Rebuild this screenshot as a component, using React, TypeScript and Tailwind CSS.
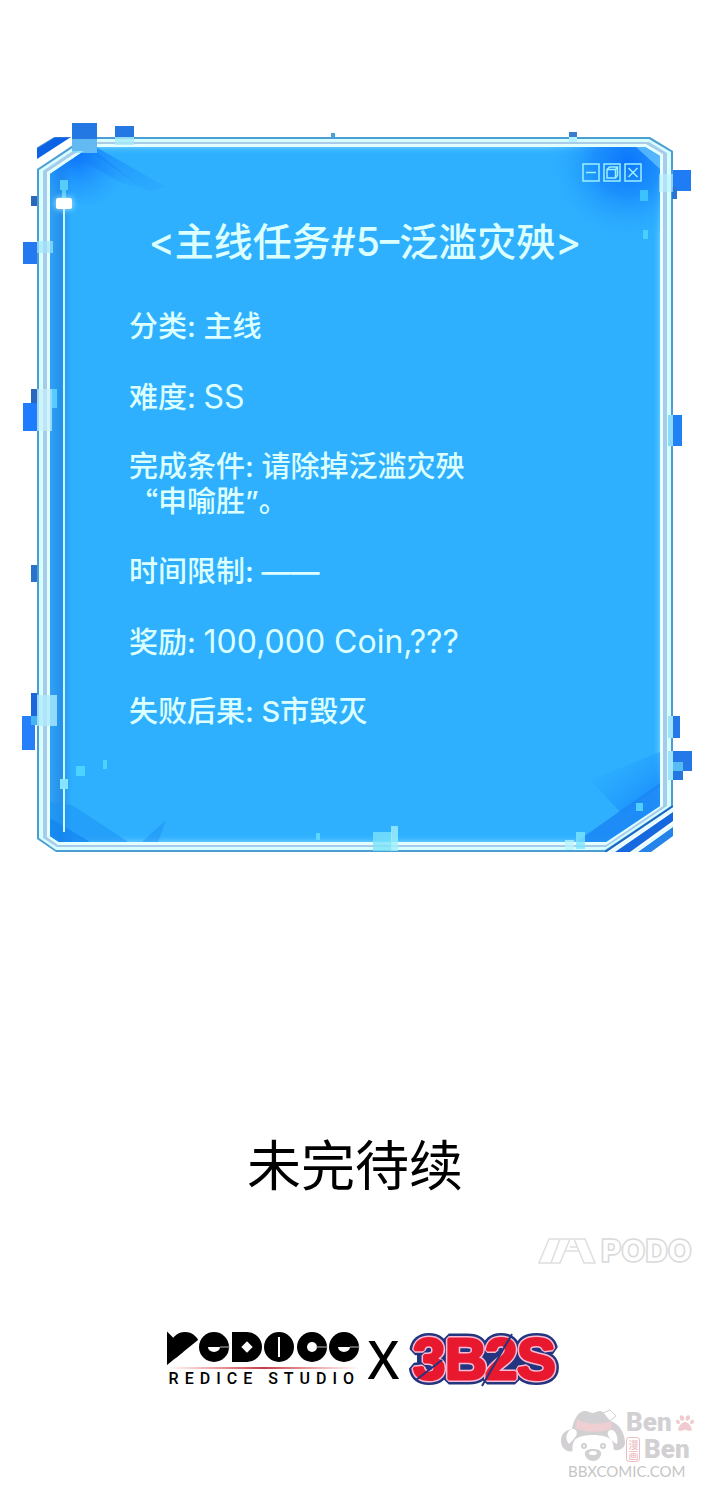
import { FaPaw } from "react-icons/fa6";

const quest = [
  { label: "分类", value: "主线" },
  { label: "难度", value: "SS", latin: true },
  { label: "完成条件", value: "请除掉泛滥灾殃", quote: "申喻胜”。" },
  { label: "时间限制", value: "——" },
  { label: "奖励", value: "100,000 Coin,???", latin: true },
  { label: "失败后果", value: "S市毁灭" },
];

// glitch pixels that stick out of the panel border
const pixels = [
  // top
  "left-[35px] top-[-14px] h-[28px] w-[25px] bg-[#2478e4]",
  "left-[35px] top-[2px] h-[14px] w-[25px] bg-[#7fd4f8]/70",
  "left-[78px] top-[-11px] h-[11px] w-[19px] bg-[#2478e4]",
  "left-[78px] top-0 h-[8px] w-[19px] bg-[#a5eafa]/80",
  "left-[294px] top-[-4px] h-[5px] w-[4px] bg-[#4aa0dc]",
  "right-[96px] top-[-5px] h-[5px] w-[8px] bg-[#3a7cd0]",
  "right-[96px] top-0 h-[5px] w-[8px] bg-[#b4f2ff]",
  // left
  "left-[-6px] top-[59px] h-[10px] w-[6px] bg-[#2a68bd]",
  "left-[-14px] top-[105px] h-[22px] w-[14px] bg-[#2478f0]",
  "left-0 top-[104px] h-[12px] w-[16px] bg-[#9fe4fa]/70",
  "left-[-6px] top-[252px] h-[16px] w-[6px] bg-[#2a68bd]",
  "left-[-14px] top-[266px] h-[28px] w-[14px] bg-[#1f7cff]",
  "left-0 top-[252px] h-[42px] w-[15px] bg-[#c8f0fb]/70",
  "left-[15px] top-[252px] h-[19px] w-[5px] bg-[#55cdff]",
  "left-[-6px] top-[428px] h-[17px] w-[6px] bg-[#2a72cc]",
  "left-[-6px] top-[556px] h-[32px] w-[6px] bg-[#1c66dc]",
  "left-[-15px] top-[579px] h-[34px] w-[13px] bg-[#2680fa]",
  "left-0 top-[558px] h-[31px] w-[20px] bg-[#aeeafc]/80",
  "left-[-6px] top-[579px] h-[9px] w-[6px] bg-[#45b4f5]",
  // right
  "right-[-18px] top-[33px] h-[21px] w-[18px] bg-[#1f7cf4]",
  "right-[-4px] top-[50px] h-[12px] w-[5px] bg-[#2876d4]",
  "right-0 top-[37px] h-[18px] w-[14px] bg-[#b9f2ff]/60",
  "right-[-9px] top-[278px] h-[31px] w-[9px] bg-[#2080f4]",
  "right-0 top-[278px] h-[31px] w-[5px] bg-[#8edbf8]",
  "right-[-7px] top-[579px] h-[22px] w-[7px] bg-[#2478e8]",
  "right-0 top-[579px] h-[22px] w-[5px] bg-[#9fe4fa]",
  "right-[-19px] top-[614px] h-[20px] w-[19px] bg-[#2478e8]",
  "right-[-10px] top-[634px] h-[9px] w-[10px] bg-[#2478e0]",
  "right-[-10px] top-[625px] h-[9px] w-[10px] bg-[#58bcf4]",
  "right-0 top-[614px] h-[29px] w-[5px] bg-[#9fe4fa]",
  // inside
  "right-[25px] top-[53px] h-[11px] w-[8px] bg-[#3cc2ff]",
  "right-[25px] top-[93px] h-[9px] w-[5px] bg-[#4ad0fc]",
  "left-[39px] top-[629px] h-[10px] w-[9px] bg-[#4ad4ff]",
  "left-[66px] top-[623px] h-[9px] w-[4px] bg-[#4ad4ff]",
  "left-[23px] top-[642px] h-[10px] w-[8px] bg-[#86e4fb]",
  "right-[30px] top-[666px] h-[8px] w-[7px] bg-[#4fd0ff]",
  "left-[279px] top-[696px] h-[7px] w-[4px] bg-[#5cd8ff]",
  "left-[336px] top-[695px] h-[19px] w-[19px] bg-[#7ce2fa]/80",
  "left-[354px] top-[689px] h-[25px] w-[7px] bg-[#a0f0fb]/80",
  "right-[88px] top-[695px] h-[17px] w-[9px] bg-[#7ce6ff]/80",
  "right-[99px] top-[703px] h-[10px] w-[9px] bg-[#b8f4fc]/80",
];

const WindowButtons = () => (
  <div className="flex justify-end gap-[3px]">
    <button type="button" aria-label="minimize" className="h-[19px] w-[18px] text-[#9cf0ff]">
      <svg viewBox="0 0 18 19" fill="none" stroke="currentColor" strokeWidth="1.5">
        <rect x="1" y="1" width="16" height="17" />
        <path d="M4 9.500h10" />
      </svg>
    </button>
    <button type="button" aria-label="restore" className="h-[19px] w-[18px] text-[#9cf0ff]">
      <svg viewBox="0 0 18 19" fill="none" stroke="currentColor" strokeWidth="1.5">
        <rect x="1" y="1" width="16" height="17" />
        <path d="M4 6.500h8.500v8.500h-8.500zM4 6.500L6.500 4h8v8.500l-2 2.500M12.500 6.500l2-2.500" />
      </svg>
    </button>
    <button type="button" aria-label="close" className="h-[19px] w-[18px] text-[#9cf0ff]">
      <svg viewBox="0 0 18 19" fill="none" stroke="currentColor" strokeWidth="1.5">
        <rect x="1" y="1" width="16" height="17" />
        <path d="M4.500 5l9 9M13.500 5l-9 9" />
      </svg>
    </button>
  </div>
);

// shaded corners and the slider line, drawn under the text
const PanelShading = () => (
  <>
    <div className="absolute inset-y-0 left-0 w-[22px] bg-linear-to-r from-[#2fa2f6] via-[#2690e8] to-[#2eb0ff]" />
    <svg className="absolute left-0 top-0 h-[70px] w-[130px]" viewBox="0 0 130 70">
      <defs>
        <radialGradient id="tl" gradientUnits="userSpaceOnUse" cx="26" cy="8" r="56">
          <stop offset="0" stopColor="#0c72fb" />
          <stop offset="1" stopColor="#1e96ff" stopOpacity="0" />
        </radialGradient>
        <linearGradient id="beam" x1="0" y1="0" x2="1" y2="1">
          <stop offset="0" stopColor="#0b76fa" stopOpacity="0.9" />
          <stop offset="1" stopColor="#2395f8" stopOpacity="0.2" />
        </linearGradient>
      </defs>
      <path d="M0 0h30l52 35-10 22H0z" fill="url(#tl)" />
      <path d="M20 8L40 0l54 42-22-6z" fill="url(#beam)" opacity="0.8" />
      <path d="M46 0l70 40-18 4L38 5z" fill="url(#beam)" opacity="0.7" />
    </svg>
    <svg className="absolute right-0 top-0 h-[100px] w-[150px]" viewBox="0 0 150 100">
      <defs>
        <radialGradient id="tr" gradientUnits="userSpaceOnUse" cx="118" cy="14" r="84">
          <stop offset="0" stopColor="#0c76fb" />
          <stop offset="0.4" stopColor="#1688fc" stopOpacity="0.8" />
          <stop offset="1" stopColor="#2eb0ff" stopOpacity="0" />
        </radialGradient>
      </defs>
      <rect width="150" height="100" fill="url(#tr)" />
      <path d="M126 0h24v22z" fill="#8ee0ff" opacity="0.5" />
    </svg>
    <svg className="absolute bottom-0 right-0 h-[90px] w-[110px]" viewBox="0 0 110 90">
      <defs>
        <linearGradient id="br" x1="0" y1="0" x2="1" y2="1">
          <stop offset="0" stopColor="#2eb0ff" stopOpacity="0" />
          <stop offset="1" stopColor="#1180fa" />
        </linearGradient>
      </defs>
      <path d="M40 28L110 0v34L72 62z" fill="url(#br)" />
      <path d="M26 90L110 31v59z" fill="#1b86f5" opacity="0.85" />
    </svg>
    <svg className="absolute bottom-0 left-0 h-[50px] w-[130px]" viewBox="0 0 130 50">
      <path d="M0 10L22 13 78 50H0z" fill="#1a90f6" opacity="0.5" />
      <path d="M0 26L40 50H0z" fill="#1180f0" opacity="0.6" />
      <path d="M92 50l24-22-8 22z" fill="#1b86f0" opacity="0.4" />
    </svg>
    <div className="absolute bottom-[10px] left-[13px] top-[58px] w-[2px] bg-[#c9f6ff]" />
    <div className="absolute left-[10px] top-[33px] h-[10px] w-[8px] bg-[#58ccf8]" />
    <div className="absolute left-[12px] top-[43px] h-[8px] w-[4px] bg-[#58ccf8]" />
    <div className="absolute left-[6px] top-[51px] h-[11px] w-[16px] rounded-[2px] bg-white shadow-[0_0_6px_#b8f4ff]" />
  </>
);

const QuestPanel = () => (
  <section className="relative">
    {/* four nested borders, each with cut corners */}
    <div className="bg-[#4c9ed2] p-[2px] [clip-path:polygon(0_32px,48px_0,calc(100%-23px)_0,100%_14px,100%_calc(100%-46px),calc(100%-68px)_100%,19px_100%,0_calc(100%-13px))]">
      <div className="bg-[#d6fdff] px-[4px] py-[3px] [clip-path:polygon(0_31px,47px_0,calc(100%-22px)_0,100%_13px,100%_calc(100%-44px),calc(100%-66px)_100%,17px_100%,0_calc(100%-12px))]">
        <div className="bg-[#a8cbea] px-[4px] py-[2px] [clip-path:polygon(0_29px,43px_0,calc(100%-18px)_0,100%_11px,100%_calc(100%-41px),calc(100%-61px)_100%,14px_100%,0_calc(100%-9px))]">
          <div className="bg-[#e4ffff] p-[3px] [clip-path:polygon(0_28px,42px_0,calc(100%-17px)_0,100%_10px,100%_calc(100%-39px),calc(100%-57px)_100%,11px_100%,0_calc(100%-8px))]">
            <div className="relative bg-[#2eb0ff] pb-[113px] pt-4 shadow-[inset_0_0_6px_#8fdcff] [clip-path:polygon(0_27px,40px_0,calc(100%-15px)_0,100%_9px,100%_calc(100%-36px),calc(100%-54px)_100%,9px_100%,0_calc(100%-6px))]">
              <PanelShading />
              <div className="relative">
                <div className="pr-[18px]">
                  <WindowButtons />
                </div>
                <h1 className="mt-[30px] pl-5 text-center text-[39px] font-medium leading-[60px] text-[#dcffff]">
                  &lt;主线任务#5–泛滥灾殃&gt;
                </h1>
                <dl className="mt-[37px] flex flex-col gap-[35px] pl-[79px] text-[29px] font-medium leading-[35px] text-[#dcffff]">
                  {quest.map((item) => (
                    <div key={item.label} className={item.quote ? "h-[70px]" : "h-[35px]"}>
                      <dt className="inline">{item.label}: </dt>
                      <dd className={item.latin ? "inline text-[32px] font-normal" : "inline"}>
                        {item.value}
                        {item.quote && (
                          <span className="flex h-[35px]">
                            <span className="font-['Noto_Sans_CJK_SC',sans-serif]">“</span>
                            <span>{item.quote}</span>
                          </span>
                        )}
                      </dd>
                    </div>
                  ))}
                </dl>
              </div>
            </div>
          </div>
        </div>
      </div>
    </div>
    {/* stripes outside the cut corners */}
    <svg className="absolute left-0 top-0 h-[26px] w-[48px]" viewBox="0 0 48 26">
      <path d="M0 11L18 0h16L0 22z" fill="#0c62e4" />
      <path d="M0 11L18 0h16" fill="none" stroke="#4a8fd0" />
    </svg>
    <svg className="absolute bottom-0 right-0 h-[48px] w-[70px]" viewBox="0 0 70 48">
      <path d="M70 2L2 48" stroke="#1b68c4" strokeWidth="2" />
      <path d="M12 48L70 8v9L27 48z" fill="#1668de" />
      <path d="M35 48L70 23v9L48 48z" fill="#2484ea" />
      <path d="M8 48L70 5M31 48L70 21" stroke="#dffcff" strokeWidth="2" />
    </svg>
    {pixels.map((pixel) => (
      <span key={pixel} className={`absolute ${pixel}`} />
    ))}
  </section>
);

const PodoLogo = () => (
  <div className="flex items-center justify-end gap-1 pr-[13px]">
    <svg className="h-[26px] w-[58px]" viewBox="0 0 58 26" fill="none" stroke="#dedede" strokeWidth="1.5">
      <path d="M1 25L11 1h11l-9 24zM22 1h25l10 24H46l-5-12H27l-5 12H13M27 13l5-12M41 13L36 1M32 9h7" />
    </svg>
    <svg className="h-[38px] w-[97px]" viewBox="0 0 97 38">
      <text x="1" y="30" fill="#fff" stroke="#dadada" strokeWidth="1.5" className="font-['Inter',sans-serif] text-[31px] font-black">
        PODO
      </text>
    </svg>
  </div>
);

const RediceLogo = () => (
  <div className="flex w-[193px] flex-col">
    <svg className="h-[36px] w-full" viewBox="0 0 193 36" role="img" aria-label="REDICE">
      <defs>
        <clipPath id="slant">
          <polygon points="0,0 0,34 31,9 31,0" />
        </clipPath>
      </defs>
      <g clipPath="url(#slant)">
        <circle cx="18" cy="16" r="15" />
        <rect x="0" y="9" width="16" height="26" />
        <rect x="-6" y="3" width="12" height="12" transform="rotate(45 0 9)" />
      </g>
      <circle cx="47" cy="16" r="15" />
      <path d="M41 16h12a6 5 0 0 1-12 0z" fill="#fff" />
      <path d="M53 16h10" stroke="#bbb" />
      <rect x="65" y="1" width="15" height="30" />
      <circle cx="80" cy="16" r="15" />
      <rect x="76" y="12" width="8" height="8" fill="#fff" transform="rotate(45 80 16)" />
      <circle cx="112" cy="16" r="15" />
      <rect x="111" y="6" width="2" height="20" fill="#fff" />
      <circle cx="145" cy="16" r="15" />
      <circle cx="145" cy="16" r="5" fill="#fff" />
      <path d="M149 16h12" stroke="#bbb" />
      <circle cx="177" cy="16" r="15" />
      <path d="M171 16h12a6 5 0 0 1-12 0z" fill="#fff" />
      <path d="M183 16h10" stroke="#bbb" />
    </svg>
    <div className="h-[2px] bg-linear-to-r from-white via-[#c4384c] to-white" />
    <p className="whitespace-nowrap pl-[2px] font-['Roboto',sans-serif] text-[16px] font-medium leading-[19px] tracking-[6px] text-black">
      REDICE STUDIO
    </p>
  </div>
);

const TeamLogo = () => (
  <svg className="h-[74px] w-[152px]" viewBox="0 0 152 74">
    <g className="font-['Liberation_Sans',sans-serif] text-[58px] font-bold" strokeLinejoin="bevel">
      <rect x="10" y="23" width="130" height="30" fill="#23357f" />
      <text x="6 38 78 110" y="57" fill="#23357f" stroke="#23357f" strokeWidth="11">3B2S</text>
      <text x="6 38 78 110" y="57" fill="#f7b9d0" stroke="#f9bcd4" strokeWidth="6">3B2S</text>
      <text x="6 38 78 110" y="57" fill="#e8192f" stroke="#e8192f" strokeWidth="3">3B2S</text>
    </g>
    <path d="M35 38L9 58M105 12L75 64" stroke="#23357f" strokeWidth="2" />
  </svg>
);

const BenBenMark = () => (
  <div className="flex justify-end pr-[14px]">
    <div className="flex w-[136px] flex-col text-[#d2d0d2]">
      <div className="flex h-[54px]">
        <svg className="h-[54px] w-[66px]" viewBox="0 0 66 54">
          <path d="M12 20C14 8 20 1 26 2c4 1 6 3 10 1 5-3 10 0 14 9 9 2 15 12 15 22 0 6-8 9-12 6C48 34 46 30 33 30S16 36 13 42C6 44 0 38 1 30c1-6 5-9 11-10z" fill="#d2d0d2" />
          <path d="M17 10c8 6 26 6 34 2l1 7c-10 5-26 5-36 0z" fill="#f0cfd3" />
          <path d="M43 4l7-3 6 6-6 5z" fill="#fff" stroke="#d2d0d2" />
          <path d="M10 21c4-3 9 1 6 6-2 3-5 6-7 8-4-4-3-11 1-14zM50 21c5-2 9 8 7 14-4-2-8-6-9-9-1-2 0-4 2-5z" fill="#fff" />
          <path d="M14 32c4-8 34-8 38 0 3 7 2 14-5 19-8 3-20 3-28 0-7-5-8-12-5-19z" fill="#fff" />
          <circle cx="24" cy="37" r="2" fill="none" stroke="#d2d0d2" strokeWidth="2" />
          <circle cx="43" cy="37" r="2" fill="none" stroke="#d2d0d2" strokeWidth="2" />
          <path d="M33 40c6 0 9 2 8 6-1 3-4 6-8 6s-7-3-8-6c-1-4 2-6 8-6z" fill="#d2d0d2" />
          <ellipse cx="33" cy="44" rx="4" ry="2" fill="#fff" />
        </svg>
        <div className="flex flex-col font-['Roboto',sans-serif] text-[26px] font-black leading-[27px]">
          <div className="flex items-center gap-1">
            <span>Ben</span>
            <FaPaw className="h-[18px] w-[18px] text-[#f0cacf]" />
          </div>
          <div className="flex items-center gap-1">
            <span className="flex h-[25px] w-[14px] items-center justify-center rounded-[3px] border border-[#ecbfc5] font-['Noto_Sans_CJK_SC',sans-serif] text-[10px] font-medium leading-[12px] text-[#ecbfc5] [writing-mode:vertical-rl]">
              漫画
            </span>
            <span>Ben</span>
          </div>
        </div>
      </div>
      <p className="whitespace-nowrap pl-2 font-['Lato',sans-serif] text-[15px] leading-[16px] text-[#c6c6c6]">
        BBXCOMIC.COM
      </p>
    </div>
  </div>
);

const App = () => {
  return (
    <main className="bg-white pb-[14px] pt-[137px] font-['Inter','Noto_Sans_CJK_SC',sans-serif]">
      <div className="px-[37px]">
        <QuestPanel />
      </div>
      <h2 className="mt-[281px] text-center font-['Noto_Sans_CJK_SC',sans-serif] text-[54px] leading-[60px] text-black">
        未完待续
      </h2>
      <div className="mt-[39px]">
        <PodoLogo />
      </div>
      <div className="mt-[52px] flex items-center justify-center gap-[8px] pl-4">
        <RediceLogo />
        <span className="font-['Noto_Sans',sans-serif] text-[52px] font-medium leading-[60px] text-black">X</span>
        <TeamLogo />
      </div>
      <div className="mt-[13px]">
        <BenBenMark />
      </div>
    </main>
  );
};

export default App;
